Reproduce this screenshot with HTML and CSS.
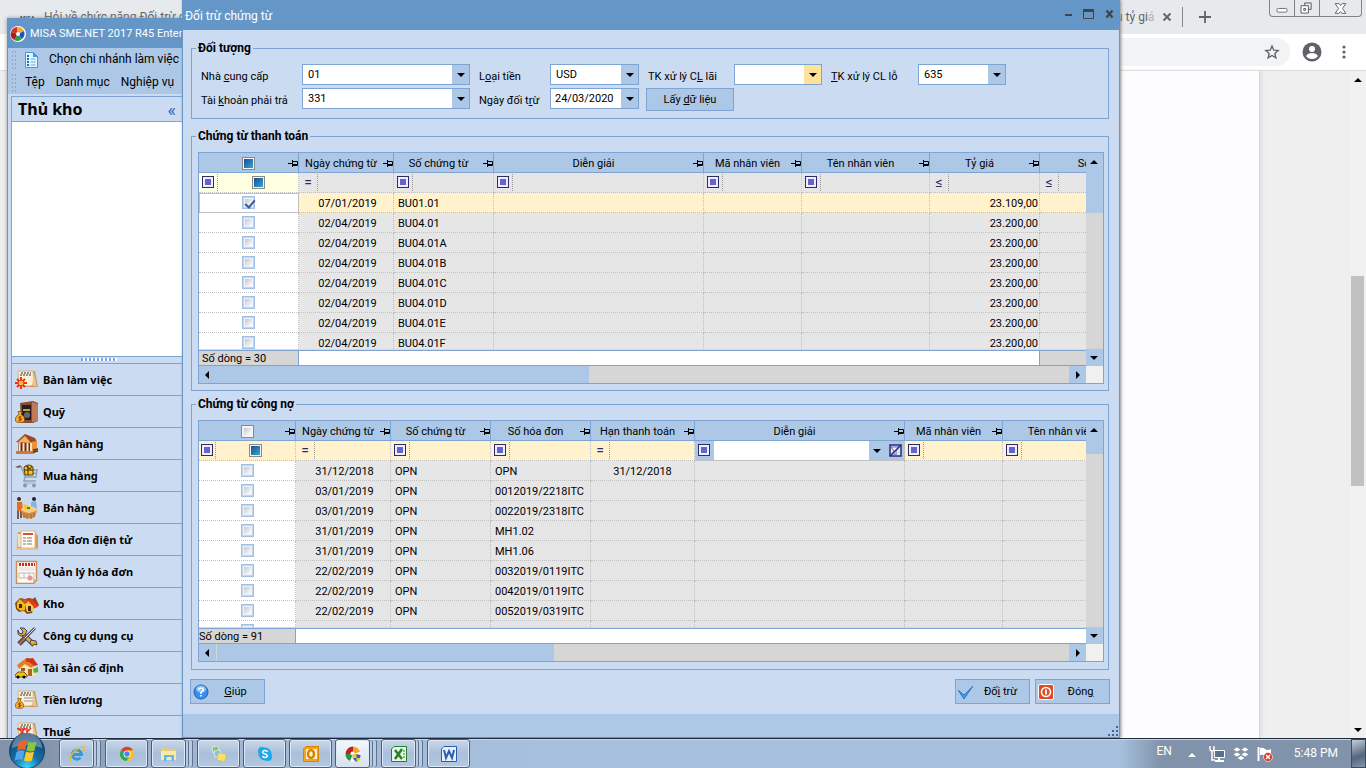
FILE: index.html
```html
<!DOCTYPE html>
<html lang="vi">
<head>
  <meta charset="UTF-8" />
  <meta name="viewport" content="width=device-width, initial-scale=1.0" />
  <title>Đối trừ chứng từ</title>
  <link rel="stylesheet" href="styles.css">
</head>
<body>

<svg class="defs" width="0" height="0" aria-hidden="true">
  <symbol id="pin" viewBox="0 0 10 8"><path d="M0 4.500h4M4.500 1v7M5 2.500h4.500v4H5M5 5.500h4" fill="none" stroke="#000"/></symbol>
  <symbol id="scroll" viewBox="0 0 24 24">
    <path d="M3 3h17l3 16H8z" fill="#c8955a"/><path d="M3 3h15l1 14-4 1H4z" fill="#fbf0d8" stroke="#d9b27c"/>
    <path d="M6 5h10M5 7h12" stroke="#333" stroke-dasharray="2 1"/><path d="M19 5l3 14-5-2" fill="#e8c48f"/>
  </symbol>
  <symbol id="bag" viewBox="0 0 10 12">
    <path d="M3 1h4L6 4c3 1 4 4 3.500 6.500Q9 12 5 12T.5 10.500C0 8 1 5 4 4z" fill="#f2b322" stroke="#8a4a10" stroke-width=".8"/>
    <path d="M6.500 6.500Q4 5.500 3.800 7T6.200 8.500 3.500 10M5 5.500v5.500" fill="none" stroke="#a32b10" stroke-width=".9"/>
  </symbol>
</svg>

<div class="desktop">

  <!-- Trình duyệt phía sau -->
  <div class="browser">
    <div class="tabs">
      <span class="favicon">MISA</span>
      <span class="tab-title">Hỏi về chức năng Đối trừ c</span>
      <span class="tab-end">u tỷ gi<i>á</i></span>
      <svg class="tab-x" viewBox="0 0 10 10"><path d="M1.500 1.500l7 7M8.500 1.500l-7 7" stroke="#5f6368" stroke-width="1.800"/></svg>
      <span class="tab-sep"></span>
      <svg class="tab-new" viewBox="0 0 12 12"><path d="M6 0v12M0 6h12" stroke="#5f6368" stroke-width="1.800"/></svg>
      <div class="win-buttons">
        <svg viewBox="0 0 26 16"><rect x="7.500" y="8.500" width="11" height="4" rx="1.500" fill="#fff" stroke="#666"/></svg>
        <svg viewBox="0 0 26 16"><path d="M10.500 2.500h7v7h-7z" fill="none" stroke="#555"/><path d="M6.500 5.500h8v8h-8z" fill="#fff" stroke="#555"/><path d="M9.500 8.500h2v2h-2z" fill="none" stroke="#555"/></svg>
        <svg viewBox="0 0 42 16"><path d="M15.500 3.500h4l1.500 2 1.500-2h4l-3.500 5 3.500 5h-4l-1.500-2-1.500 2h-4l3.500-5z" fill="#fff" stroke="#666"/></svg>
      </div>
    </div>
    <div class="address">
      <div class="omnibox">
        <svg width="16" height="16" viewBox="0 0 24 24"><path d="M12 3l2.600 6.200 6.700.6-5 4.400 1.500 6.600L12 17.300l-5.800 3.500 1.500-6.600-5-4.400 6.700-.6z" fill="none" stroke="#5f6368" stroke-width="2"/></svg>
      </div>
      <svg class="avatar" viewBox="0 0 20 20"><circle cx="10" cy="10" r="9.500" fill="#5f6368"/><circle cx="10" cy="7" r="3" fill="#fff"/><path d="M4 14q2-3 6-3t6 3q-2 3-6 3t-6-3" fill="#fff"/></svg>
      <svg class="dots" viewBox="0 0 4 14"><circle cx="2" cy="2" r="1.600"/><circle cx="2" cy="7" r="1.600"/><circle cx="2" cy="12" r="1.600"/></svg>
    </div>
    <div class="web">
      <div class="paper"></div>
      <div class="web-scroll"><span class="tri up"></span><div class="web-thumb"></div><span class="tri down"></span></div>
    </div>
  </div>

  <!-- Cửa sổ chính MISA -->
  <div class="main-window">
    <div class="main-title">
      <svg width="16" height="16" viewBox="0 0 16 16"><circle cx="8" cy="8" r="8" fill="#fff"/><path d="M8 8L1 6a7 7 0 0 1 6-5z" fill="#d32f2f"/><path d="M8 8L7 1a7 7 0 0 1 7 4z" fill="#f9a825"/><path d="M8 8l6-3a7 7 0 0 1-2 8z" fill="#1e50c8"/><path d="M8 8l4 5a7 7 0 0 1-8 1z" fill="#2e9e3c"/><path d="M8 8l-4 6a7 7 0 0 1-3-8z" fill="#a32020"/><circle cx="8" cy="8" r="2" fill="#fff"/></svg>
      MISA SME.NET 2017 R45 Enterprise
    </div>
    <div class="toolbar">
      <div class="tool-row">
        <span class="grip"></span>
        <svg class="doc" width="13" height="16" viewBox="0 0 13 16"><path d="M.5 .5h8l4 4v11H.5z" fill="#e5f5ff" stroke="#3a9be0"/><path d="M8 0l5 5H8z" fill="#3a9be0"/><path d="M2 4h2M2 7h2M2 10h2M2 13h2" stroke="#176fbf" stroke-width="2"/><path d="M5.500 7h5M5.500 10h5M5.500 13h5" stroke="#5cb3ee"/></svg>
        Chọn chi nhánh làm việc
      </div>
      <div class="tool-row menu"><span class="grip"></span><a href="#">Tệp</a><a href="#">Danh mục</a><a href="#">Nghiệp vụ</a></div>
    </div>
    <div class="nav">
      <div class="nav-head"><h1>Thủ kho</h1><span>«</span></div>
      <div class="nav-blank"></div>
      <div class="splitter"><span></span></div>
      <ul>
        <li><a href="#"><svg viewBox="0 0 24 24"><use href="#scroll"/><g stroke="#e8301c" stroke-width="2"><path d="M6 9v12M0 15h12M2 11l8 8M10 11l-8 8"/></g><circle cx="6" cy="15" r="3" fill="#ffb62e" stroke="#e8301c"/></svg>Bàn làm việc</a></li>
        <li><a href="#"><svg viewBox="0 0 24 24"><path d="M5 3l13-2 5 2v18l-5 2H6z" fill="#8c4a35"/><path d="M17 2l6 2v17l-6 1z" fill="#c07a5c"/><path d="M7 5h9v15H7z" fill="#2c1a16"/><path d="M8 9h7v2H8z" fill="#a8b030"/><circle cx="12" cy="15" r="3" fill="#667"/><use href="#bag" x="0" y="10" width="10" height="13"/></svg>Quỹ</a></li>
        <li><a href="#"><svg viewBox="0 0 24 24"><path d="M1 10L10 2l10 4 2 4-8 2z" fill="#a34523"/><path d="M3 10l7-6 6 7z" fill="#f0b560"/><path d="M16 10l6-1v9l-5 2z" fill="#e7953c"/><path d="M3 11h13v8H3z" fill="#6a2c16"/><path d="M4.500 11v8M8.500 11v8M12.500 11v8M16 11v8" stroke="#fbe3bd" stroke-width="2"/><path d="M1 19h16l6-2v2l-5 3H1z" fill="#c97a45"/><path d="M18 18l5-1M18 20l5-1" stroke="#442" stroke-width="1.500"/></svg>Ngân hàng</a></li>
        <li><a href="#"><svg viewBox="0 0 24 24"><path d="M0 3l5-2 2 2-4 1z" fill="#8a5a55"/><path d="M6 2l4 11h11l1-8M9 10l12-1M10 13l-1 4h12M8 6h14" fill="none" stroke="#8fa3b3" stroke-width="1.500"/><path d="M9 3q5-4 9 0v8h-8z" fill="#f4c51d" stroke="#5a3b0c"/><path d="M13 2v9M10 6h8M11 2l4 3 2-3" stroke="#3a260b" fill="none"/><path d="M9 19h11M8 21l12-3" stroke="#b9c5cf" stroke-width="1.500"/><circle cx="10" cy="21.500" r="2" fill="#8a98a5"/><circle cx="19" cy="21.500" r="2" fill="#8a98a5"/></svg>Mua hàng</a></li>
        <li><a href="#"><svg viewBox="0 0 24 24"><circle cx="4" cy="3" r="2" fill="#4a2a1c"/><path d="M2 6h5l1 9H2z" fill="#ec6a1c"/><path d="M3 15v8M6 15v7" stroke="#5a3520" stroke-width="1.500"/><circle cx="19" cy="3" r="2" fill="#223"/><path d="M16 6l5-1 1 8h-6z" fill="#7fb3e0"/><ellipse cx="14" cy="14" rx="8" ry="4" fill="#f6cb86"/><path d="M6 14q8 6 16 0l-2 7q-6 3-12 0z" fill="#d18d45"/><path d="M9 17v5M12 18v5M16 18v5M19 17v4" stroke="#a8672b"/><path d="M8 8l4 1 4 4-6 1z" fill="#f0cb20"/><path d="M12 12h3" stroke="#4a8d28" stroke-width="2"/></svg>Bán hàng</a></li>
        <li><a href="#"><svg viewBox="0 0 24 24"><path d="M3 4h17l3 4v13H2z" fill="#d09a62"/><path d="M3 6h4v13H3z" fill="#f6e2bd"/><path d="M6 3h14v17H6z" fill="#fffdf5" stroke="#dcb98a"/><path d="M8 6h10" stroke="#e04a2f" stroke-width="2"/><path d="M8 10h3M12 10h5M8 13h3M12 13h5M8 16h3M12 16h5" stroke="#777"/><path d="M1 20h22v2H1z" fill="#e9bf8a"/></svg>Hóa đơn điện tử</a></li>
        <li><a href="#"><svg viewBox="0 0 24 24"><path d="M1.500 1.500h20v19l-3 3h-17z" fill="#fff9f0" stroke="#c98f5c" stroke-width="1.500"/><path d="M4 4.500h16" stroke="#e21f1f" stroke-width="3" stroke-dasharray="2 1"/><path d="M4 8h16M4 10h16" stroke="#ddd"/><path d="M4 13h15v5H4zM9 13v5M14 13v5" fill="none" stroke="#b9bcc4"/><circle cx="15" cy="18" r="2.500" fill="#e59595"/><path d="M18 23v-4h4z" fill="#e0b47e"/></svg>Quản lý hóa đơn</a></li>
        <li><a href="#"><svg viewBox="0 0 24 24"><path d="M0 11l5-5 5 1 4-1 4 1 2-2 4 8-6 4-1 4-5 1-3-3-5 1-3-3z" fill="#8a4c12"/><path d="M2 11l3-4 5 5v6l-4 1-4-3z" fill="#f0b91c"/><path d="M10 12l4-3 5 4-1 6-6 1z" fill="#ffce3c"/><path d="M7 7l7 1-4 4z" fill="#e6492c"/><path d="M15 6l9 8-4 2-6-6z" fill="#e33a22"/><path d="M4 12v4h3v-4zM13 14v5h3v-5z" fill="#4b2406"/></svg>Kho</a></li>
        <li><a href="#"><svg viewBox="0 0 24 24"><path d="M7 9l12 12" stroke="#3c4a64" stroke-width="5"/><path d="M7 9l12 12" stroke="#f4aa28" stroke-width="3"/><path d="M5 4l3 3-1 3-3-1-1-3q-1 5 3 6l4-1 2-4-3-3z" fill="#f4aa28" stroke="#3c4a64"/><path d="M16 16l5 1 1 4-3-1-2 2-2-3z" fill="#f4aa28" stroke="#3c4a64"/><path d="M20 4L9 15" stroke="#556" stroke-width="3"/><path d="M20 4L9 15" stroke="#dde3ea"/><path d="M10 14l-6 6" stroke="#5a4440" stroke-width="5"/><path d="M10 14l-6 6" stroke="#a37060" stroke-width="2"/></svg>Công cụ dụng cụ</a></li>
        <li><a href="#"><svg viewBox="0 0 24 24"><path d="M4 10h14l3 2v8H4z" fill="#fbe3ab"/><path d="M2 9l8-6 9 7-3 2-6-4-6 5z" fill="#eb7a22"/><path d="M10 3l8-1 5 7-4 1z" fill="#d9301c"/><path d="M11 2h3v4h-3z" fill="#b84a22"/><path d="M13 13h4v7h-4z" fill="#b5641f"/><path d="M6 12h4v3H6z" fill="#8a6030"/><path d="M18 13l5-2v5l-4 1z" fill="#55b02c"/><path d="M0 19l3-3h6l3 3v2H0z" fill="#f3bf1a" stroke="#7a560b"/><circle cx="3" cy="21" r="1.500"/><circle cx="9" cy="21" r="1.500"/></svg>Tài sản cố định</a></li>
        <li><a href="#"><svg viewBox="0 0 24 24"><use href="#scroll"/><path d="M9 10h9M9 13h9" stroke="#999"/><use href="#bag" x="0" y="9" width="9" height="12"/></svg>Tiền lương</a></li>
        <li><a href="#"><svg viewBox="0 0 24 24"><use href="#scroll"/><path d="M3 8l8 8M10 8l-6 8M2 9h9M12 8v8M12 12l4-4" stroke="#e0302a" stroke-width="1.500"/></svg>Thuế</a></li>
      </ul>
    </div>
  </div>

  <!-- Hộp thoại đối trừ chứng từ -->
  <div class="dialog" role="dialog" aria-labelledby="dlg-title">
    <div class="dialog-title">
      <span id="dlg-title">Đối trừ chứng từ</span>
      <div class="dialog-controls">
        <svg viewBox="0 0 12 12"><path d="M2 7h7" stroke="#444" stroke-width="2"/></svg>
        <svg viewBox="0 0 12 12"><path d="M.5 1.500h10v9H.5z" fill="none" stroke="#444"/><path d="M0 2.500h11" stroke="#444" stroke-width="3"/></svg>
        <svg viewBox="0 0 12 12"><path d="M3.500 2.500l6 7M9.500 2.500l-6 7" stroke="#444" stroke-width="2.200"/></svg>
      </div>
    </div>

    <div class="dialog-body">
      <fieldset class="doi-tuong">
        <legend>Đối tượng</legend>
        <div class="form">
          <label for="ncc">Nhà <u>c</u>ung cấp</label>
          <span class="combo"><select id="ncc"><option>01</option></select></span>
          <label for="tien">L<u>o</u>ại tiền</label>
          <span class="combo"><select id="tien"><option>USD</option></select></span>
          <label for="lai">TK xử lý C<u>L</u> lãi</label>
          <span class="combo hot"><select id="lai"><option></option></select></span>
          <label for="lo"><u>T</u>K xử lý CL lỗ</label>
          <span class="combo"><select id="lo"><option>635</option></select></span>

          <label for="tk">Tài <u>k</u>hoản phải trả</label>
          <span class="combo"><select id="tk"><option>331</option></select></span>
          <label for="ngay">Ngày đối t<u>r</u>ừ</label>
          <span class="combo date"><input type="text" id="ngay" value="24/03/2020"></span>
          <button type="button" class="load">Lấy <u>d</u>ữ liệu</button>
        </div>
      </fieldset>

      <fieldset class="thanh-toan">
        <legend>Chứng từ thanh toán</legend>
        <div class="grid">
          <div class="view">
            <table>
              <colgroup><col class="w100"><col class="w95"><col class="w100"><col class="w210"><col class="w98"><col class="w128"><col class="w110"><col class="w120"></colgroup>
              <thead>
                <tr>
                  <th><div><span><input type="checkbox" class="tri-state" aria-label="Chọn tất cả"></span><svg><use href="#pin"/></svg></div></th>
                  <th><div><span>Ngày chứng từ</span><svg><use href="#pin"/></svg></div></th>
                  <th><div><span>Số chứng từ</span><svg><use href="#pin"/></svg></div></th>
                  <th><div><span>Diễn giải</span><svg><use href="#pin"/></svg></div></th>
                  <th><div><span>Mã nhân viên</span><svg><use href="#pin"/></svg></div></th>
                  <th><div><span>Tên nhân viên</span><svg><use href="#pin"/></svg></div></th>
                  <th><div><span>Tỷ giá</span><svg><use href="#pin"/></svg></div></th>
                  <th><div><span>Số tiền</span><svg><use href="#pin"/></svg></div></th>
                </tr>
                <tr class="filter">
                  <td class="pale"><div><span class="op"><b></b></span><input type="checkbox" class="tri-state" aria-label="Lọc chọn"></div></td>
                  <td><div><span class="op">=</span><input type="text" aria-label="Lọc ngày"></div></td>
                  <td><div><span class="op"><b></b></span><input type="text" aria-label="Lọc số chứng từ"></div></td>
                  <td><div><span class="op"><b></b></span><input type="text" aria-label="Lọc diễn giải"></div></td>
                  <td><div><span class="op"><b></b></span><input type="text" aria-label="Lọc mã nhân viên"></div></td>
                  <td><div><span class="op"><b></b></span><input type="text" aria-label="Lọc tên nhân viên"></div></td>
                  <td><div><span class="op">≤</span><input type="text" aria-label="Lọc tỷ giá"></div></td>
                  <td><div><span class="op">≤</span><input type="text" aria-label="Lọc số tiền"></div></td>
                </tr>
              </thead>
              <tbody>
                <tr class="selected"><td><input type="checkbox" aria-label="BU01.01" checked></td><td>07/01/2019</td><td>BU01.01</td><td></td><td></td><td></td><td class="num">23.109,00</td><td></td></tr>
                <tr><td><input type="checkbox" aria-label="BU04.01"></td><td>02/04/2019</td><td>BU04.01</td><td></td><td></td><td></td><td class="num">23.200,00</td><td></td></tr>
                <tr><td><input type="checkbox" aria-label="BU04.01A"></td><td>02/04/2019</td><td>BU04.01A</td><td></td><td></td><td></td><td class="num">23.200,00</td><td></td></tr>
                <tr><td><input type="checkbox" aria-label="BU04.01B"></td><td>02/04/2019</td><td>BU04.01B</td><td></td><td></td><td></td><td class="num">23.200,00</td><td></td></tr>
                <tr><td><input type="checkbox" aria-label="BU04.01C"></td><td>02/04/2019</td><td>BU04.01C</td><td></td><td></td><td></td><td class="num">23.200,00</td><td></td></tr>
                <tr><td><input type="checkbox" aria-label="BU04.01D"></td><td>02/04/2019</td><td>BU04.01D</td><td></td><td></td><td></td><td class="num">23.200,00</td><td></td></tr>
                <tr><td><input type="checkbox" aria-label="BU04.01E"></td><td>02/04/2019</td><td>BU04.01E</td><td></td><td></td><td></td><td class="num">23.200,00</td><td></td></tr>
                <tr><td><input type="checkbox" aria-label="BU04.01F"></td><td>02/04/2019</td><td>BU04.01F</td><td></td><td></td><td></td><td class="num">23.200,00</td><td></td></tr>
              </tbody>
            </table>
          </div>
          <div class="summary"><span class="w100">Số dòng = 30</span><span class="blank w741"></span></div>
          <div class="vscroll"><div class="thumb"><span class="tri up"></span></div><div class="btn"><span class="tri down"></span></div></div>
          <div class="hscroll"><div class="thumb"><span class="tri left"></span></div><div class="btn"><span class="tri right"></span></div></div>
        </div>
      </fieldset>

      <fieldset class="cong-no">
        <legend>Chứng từ công nợ</legend>
        <div class="grid">
          <div class="view">
            <table>
              <colgroup><col class="w97"><col class="w95"><col class="w100"><col class="w100"><col class="w104"><col class="w210"><col class="w98"><col class="w128"></colgroup>
              <thead>
                <tr>
                  <th><div><span><input type="checkbox" class="head-box" aria-label="Chọn tất cả"></span><svg><use href="#pin"/></svg></div></th>
                  <th><div><span>Ngày chứng từ</span><svg><use href="#pin"/></svg></div></th>
                  <th><div><span>Số chứng từ</span><svg><use href="#pin"/></svg></div></th>
                  <th><div><span>Số hóa đơn</span><svg><use href="#pin"/></svg></div></th>
                  <th><div><span>Hạn thanh toán</span><svg><use href="#pin"/></svg></div></th>
                  <th><div><span>Diễn giải</span><svg><use href="#pin"/></svg></div></th>
                  <th><div><span>Mã nhân viên</span><svg><use href="#pin"/></svg></div></th>
                  <th><div><span>Tên nhân viên</span><svg><use href="#pin"/></svg></div></th>
                </tr>
                <tr class="filter active">
                  <td><div><span class="op"><b></b></span><input type="checkbox" class="tri-state" aria-label="Lọc chọn"></div></td>
                  <td><div><span class="op">=</span><input type="text" aria-label="Lọc ngày"></div></td>
                  <td><div><span class="op"><b></b></span><input type="text" aria-label="Lọc số chứng từ"></div></td>
                  <td><div><span class="op"><b></b></span><input type="text" aria-label="Lọc số hóa đơn"></div></td>
                  <td><div><span class="op">=</span><input type="text" aria-label="Lọc hạn thanh toán"></div></td>
                  <td class="editing"><div><span class="op"><b></b></span><input type="text" aria-label="Lọc diễn giải"><span class="tri down"></span><svg class="funnel" viewBox="0 0 13 13"><path d="M1 1h11v11H1z" fill="#dfe3fa" stroke="#2c2c6c" stroke-width="1.500"/><path d="M2 3h8L7 7v4H5V7z" fill="#fff" stroke="#6464cc"/><path d="M1 12L12 1" stroke="#2c2c6c" stroke-width="1.500"/></svg></div></td>
                  <td><div><span class="op"><b></b></span><input type="text" aria-label="Lọc mã nhân viên"></div></td>
                  <td><div><span class="op"><b></b></span><input type="text" aria-label="Lọc tên nhân viên"></div></td>
                </tr>
              </thead>
              <tbody>
                <tr><td><input type="checkbox" aria-label="OPN"></td><td>31/12/2018</td><td>OPN</td><td>OPN</td><td class="mid">31/12/2018</td><td></td><td></td><td></td></tr>
                <tr><td><input type="checkbox" aria-label="0012019/2218ITC"></td><td>03/01/2019</td><td>OPN</td><td>0012019/2218ITC</td><td></td><td></td><td></td><td></td></tr>
                <tr><td><input type="checkbox" aria-label="0022019/2318ITC"></td><td>03/01/2019</td><td>OPN</td><td>0022019/2318ITC</td><td></td><td></td><td></td><td></td></tr>
                <tr><td><input type="checkbox" aria-label="MH1.02"></td><td>31/01/2019</td><td>OPN</td><td>MH1.02</td><td></td><td></td><td></td><td></td></tr>
                <tr><td><input type="checkbox" aria-label="MH1.06"></td><td>31/01/2019</td><td>OPN</td><td>MH1.06</td><td></td><td></td><td></td><td></td></tr>
                <tr><td><input type="checkbox" aria-label="0032019/0119ITC"></td><td>22/02/2019</td><td>OPN</td><td>0032019/0119ITC</td><td></td><td></td><td></td><td></td></tr>
                <tr><td><input type="checkbox" aria-label="0042019/0119ITC"></td><td>22/02/2019</td><td>OPN</td><td>0042019/0119ITC</td><td></td><td></td><td></td><td></td></tr>
                <tr><td><input type="checkbox" aria-label="0052019/0319ITC"></td><td>22/02/2019</td><td>OPN</td><td>0052019/0319ITC</td><td></td><td></td><td></td><td></td></tr>
                <tr><td><input type="checkbox" aria-label="0062019/0319ITC"></td><td>22/02/2019</td><td>OPN</td><td>0062019/0319ITC</td><td></td><td></td><td></td><td></td></tr>
              </tbody>
            </table>
          </div>
          <div class="summary"><span class="w97">Số dòng = 91</span><span class="blank"></span></div>
          <div class="vscroll"><div class="thumb"><span class="tri up"></span></div><div class="btn"><span class="tri down"></span></div></div>
          <div class="hscroll"><div class="thumb"><span class="tri left"></span></div><div class="btn"><span class="tri right"></span></div></div>
        </div>
      </fieldset>

      <div class="actions">
        <button type="button"><svg viewBox="0 0 16 16"><circle cx="8" cy="8" r="7" fill="#3c8df0" stroke="#1560b8"/><ellipse cx="8" cy="5" rx="5" ry="3.500" fill="#8cc3fb"/><path d="M5.500 6Q6 4 8 4t2.400 2Q10.300 7.200 8 8.500V10M8 11v1.500" fill="none" stroke="#fff" stroke-width="1.600"/></svg><span><u>G</u>iúp</span></button>
        <button type="button" class="push"><svg viewBox="0 0 16 16"><path d="M0 6l6 9 9-13-9 9z" fill="#3c9cf5" stroke="#1b62b4" stroke-width=".7"/></svg><span>Đố<u>i</u> trừ</span></button>
        <button type="button"><svg viewBox="0 0 16 16"><rect x=".5" y=".5" width="15" height="15" rx="1.500" fill="#e04a26" stroke="#fff"/><circle cx="8" cy="8" r="4.500" fill="none" stroke="#fff" stroke-width="1.600"/><path d="M8 5.500v5" stroke="#fff" stroke-width="1.800"/></svg><span>Đón<u>g</u></span></button>
      </div>
    </div>
    <div class="status">
      <svg width="11" height="11" viewBox="0 0 11 11"><path d="M8 0h2v2H8zM4 4h2v2H4zM8 4h2v2H8zM0 8h2v2H0zM4 8h2v2H4zM8 8h2v2H8z" fill="#42659c"/></svg>
    </div>
  </div>
</div>

<div class="taskbar">
  <button type="button" class="start" aria-label="Start">
    <svg viewBox="0 0 36 36">
      <defs><radialGradient id="orb" cx=".5" cy=".95" r=".9"><stop offset="0" stop-color="#3fd8ff"/><stop offset=".4" stop-color="#1673ab"/><stop offset="1" stop-color="#14406e"/></radialGradient></defs>
      <circle cx="18" cy="18" r="17.500" fill="url(#orb)" stroke="#1b4063"/><path d="M3 15a15 15 0 0 1 30 0q-15-6-30 0" fill="#fff" opacity=".3"/>
      <path d="M10 9q4-3 8-1l-2 9q-4-2-8 1z" fill="#f0622a"/><path d="M19.500 8.500q4 2 8 0l-2 9q-4 2-8 0z" fill="#8cc63e"/><path d="M7.500 19q4-3 8-1l-2 9q-4-2-8 1z" fill="#4fa8e8"/><path d="M17 18.500q4 2 8 0l-2 9q-4 2-8 0z" fill="#fcc82e"/>
    </svg>
  </button>
  <div class="tasks">
    <button type="button" class="task stack2" aria-label="Internet Explorer"><svg viewBox="0 0 16 16"><path d="M3.500 8.500h9a4.600 4.600 0 1 0-1 3" fill="none" stroke="#2c9be0" stroke-width="2.800"/><path d="M2 15Q-1 13 4 7T14 1t0 4" fill="none" stroke="#f5b921" stroke-width="1.500"/></svg></button>
    <button type="button" class="task" aria-label="Chrome"><svg viewBox="0 0 16 16"><circle cx="8" cy="8" r="7" fill="#fbc116"/><path d="M8 8L2 4.200A7 7 0 0 1 14 4.200H8z" fill="#e33b2e"/><path d="M8 8L2 4.200A7 7 0 0 0 7.500 15L11 9.500z" fill="#2da94f"/><circle cx="8" cy="8" r="3.500" fill="#fff"/><circle cx="8" cy="8" r="2.700" fill="#4285f4"/></svg></button>
    <button type="button" class="task stack2" aria-label="Explorer"><svg viewBox="0 0 16 16"><path d="M0 2h6l1 1h8v11H0z" fill="#e9cd72"/><path d="M0 5h15v9H0z" fill="#fbeaa5"/><path d="M3 15V9h10v6h-2.500v-4h-5v4z" fill="#62b8ea"/></svg></button>
    <button type="button" class="task" aria-label="Ghi chú"><svg viewBox="0 0 16 16"><path d="M1 1l6-1 1 6-6 1z" fill="#7fc965" stroke="#fff" stroke-width=".6"/><path d="M3 5l6-1 1 6-6 1z" fill="#7fc0ea" stroke="#fff" stroke-width=".6"/><path d="M7 7l8 1-1 8-8-2z" fill="#f8e26b" stroke="#d8b832" stroke-width=".6"/></svg></button>
    <button type="button" class="task" aria-label="Skype"><svg viewBox="0 0 16 16"><circle cx="8" cy="8" r="6.500" fill="#1ba9ec"/><circle cx="5" cy="5" r="4" fill="#1ba9ec"/><circle cx="11" cy="11" r="4" fill="#1ba9ec"/><path d="M10.500 6Q10 4.500 8 4.500T5.700 6.200Q5.800 7.500 8 8t2.400 2Q10 11.500 8 11.500T5.500 10" fill="none" stroke="#fff" stroke-width="1.500"/></svg></button>
    <button type="button" class="task" aria-label="Outlook"><svg viewBox="0 0 16 16"><path d="M3 .5h12.500v15H.5V3z" fill="#f2a51a" stroke="#d98300"/><path d="M3 3h11v10H3z" fill="#fff3cf"/><ellipse cx="8" cy="8" rx="3" ry="4" fill="none" stroke="#d98300" stroke-width="2.500"/></svg></button>
    <button type="button" class="task stack2 on" aria-label="MISA"><svg viewBox="0 0 16 16"><circle cx="8" cy="8" r="7.500" fill="#fff"/><path d="M8 8H.5A7.500 7.500 0 0 1 8 .5z" fill="#c41e2a"/><path d="M8 8V.5A7.500 7.500 0 0 1 15 6z" fill="#f3a61c"/><path d="M8 8l-3 7A7.500 7.500 0 0 1 .5 8z" fill="#2c9440"/><circle cx="7.500" cy="7.500" r="2" fill="#fff"/><path d="M11.500 8l4 1q0 5-4 7-4-2-4-7z" fill="#2a63c4"/><path d="M11.500 12h4q-1 3-4 4zM11.500 8v4h-4V9z" fill="#f6c92f"/></svg></button>
    <button type="button" class="task stack2" aria-label="Excel"><svg viewBox="0 0 16 16"><path d="M3 .5h12.500v15H.5V3z" fill="#e9f5e6" stroke="#26802c"/><path d="M4 4l7 9M11 3L4 13" stroke="#26802c" stroke-width="2.500"/><path d="M12 5h2M12 8h2M12 11h2" stroke="#26802c"/></svg></button>
    <button type="button" class="task" aria-label="Word"><svg viewBox="0 0 16 16"><path d="M3 .5h12.500v15H.5V3z" fill="#e8f0fb" stroke="#2a5db0"/><path d="M3 4l2 8 3-7 3 7 2-8" fill="none" stroke="#2a5db0" stroke-width="2"/></svg></button>
  </div>
  <div class="tray">
    <span class="lang">EN</span>
    <span class="tri up"></span>
    <svg viewBox="0 0 16 16"><path d="M5.500 4.500h10v7h-10z" fill="#5c7088" stroke="#fff"/><path d="M10 12v2M6 15h9" stroke="#fff" stroke-width="2"/><path d="M1 0v3q0 2 2 2t2-2V0M3 5v9h3" fill="none" stroke="#fff" stroke-width="1.500"/></svg>
    <svg viewBox="0 0 16 16"><path d="M4 1l4 2.500L4 6 0 3.500zM12 1l4 2.500L12 6 8 3.500zM4 6l4 2.500L4 11 0 8.500zM12 6l4 2.500-4 2.500-4-2.500zM8 9.500l4 2.500-4 2.500L4 12z" fill="#fff" stroke="#66788e" stroke-width=".5"/></svg>
    <svg viewBox="0 0 16 16"><path d="M1.500 1v14" stroke="#fff" stroke-width="2"/><path d="M3 2q3-1 5 1t6 0v7q-4 2-6 0T3 9z" fill="#fff"/><circle cx="11" cy="11" r="4.500" fill="#d8382c" stroke="#fff" stroke-width=".6"/><path d="M9 9l4 4M13 9l-4 4" stroke="#fff" stroke-width="1.500"/></svg>
    <span class="clock">5:48 PM</span>
  </div>
  <button type="button" class="peek" aria-label="Show desktop"></button>
</div>

</body>
</html>
```
FILE: styles.css
```css
:root {
  --title: #6496c8;
  --panel: #cbdbf1;
  --bar: #adc8e6;
  --line: #7ea4d4;
  --cell: #e6e6e6;
  --row: #fff2cc;
  --dot: #c0c0c0;
}

* {
  box-sizing: border-box;
}

body {
  margin: 0;
  height: 100vh;
  display: flex;
  flex-direction: column;
  overflow: hidden;
  font-family: Roboto, "Liberation Sans", sans-serif;
  font-size: 11px;
  line-height: 15px;
  color: #000;
}

button, input, select {
  font: inherit;
  color: inherit;
  margin: 0;
}

svg {
  display: block;
  flex: none;
}

a {
  color: inherit;
  text-decoration: none;
}

.defs {
  position: absolute;
}

.desktop {
  position: relative;
  flex: 1;
  overflow: hidden;
}

.tri {
  flex: none;
  border: 4px solid transparent;
}

.tri.up {
  border-top: 0;
  border-bottom-color: #000;
}

.tri.down {
  border-bottom: 0;
  border-top-color: #000;
}

.tri.left {
  border-left: 0;
  border-right-color: #000;
}

.tri.right {
  border-right: 0;
  border-left-color: #000;
}

/* browser */
.browser {
  height: 100%;
  display: flex;
  flex-direction: column;
  background: #fff;
}

.tabs {
  height: 34px;
  background: #e6eaed;
  display: flex;
  align-items: center;
  padding-left: 20px;
  font-size: 12px;
  color: #5f6368;
}

.favicon {
  width: 24px;
  font-size: 6px;
  font-weight: bold;
  color: #333;
}

.tab-title {
  width: 138px;
  overflow: hidden;
  white-space: nowrap;
}

.tab-end {
  margin-left: auto;
  width: 38px;
  text-align: right;
  white-space: nowrap;
}

.tab-end i {
  font-style: normal;
  opacity: 0.4;
}

.tab-x {
  width: 10px;
  height: 10px;
  margin-left: 8px;
}

.tab-sep {
  width: 1px;
  height: 20px;
  margin-left: 10px;
  background: #85898e;
}

.tab-new {
  width: 12px;
  height: 12px;
  margin: 0 58px 0 16px;
}

.win-buttons {
  display: flex;
  align-self: flex-start;
  margin-right: 4px;
  border: 1px solid #808487;
  border-top: 0;
  border-radius: 0 0 4px 4px;
}

.win-buttons svg {
  width: 25px;
  height: 16px;
  border-right: 1px solid #808487;
}

.win-buttons svg:last-child {
  width: 41px;
  border: 0;
}

.address {
  height: 37px;
  display: flex;
  align-items: center;
  border-bottom: 1px solid #d8dadc;
}

.omnibox {
  flex: 1;
  height: 28px;
  margin-left: 100px;
  padding-right: 10px;
  border-radius: 14px;
  background: #f1f3f4;
  display: flex;
  align-items: center;
  justify-content: flex-end;
}

.avatar {
  width: 20px;
  height: 20px;
  margin: 0 20px 0 12px;
}

.dots {
  width: 4px;
  height: 14px;
  margin-right: 20px;
  fill: #5f6368;
}

.web {
  flex: 1;
  display: flex;
  background: #efefef;
}

.paper {
  flex: 1;
  margin: 0 90px 0 100px;
  background: #fdfdff;
  border-right: 1px solid #d8d8d8;
  box-shadow: 2px 0 4px #e0e0e0;
}

.web-scroll {
  width: 16px;
  padding: 7px 2px 6px 1px;
  background: #f1f1f1;
  display: flex;
  flex-direction: column;
  align-items: center;
}

.web-scroll .tri {
  margin: 0 0 auto;
}

.web-scroll .tri.down {
  margin: auto 0 0;
}

.web-thumb {
  width: 13px;
  height: 32%;
  margin-bottom: 48px;
  background: #c1c1c1;
}

/* main window */
.main-window {
  position: absolute;
  left: 7px;
  top: 18px;
  width: 80%;
  min-height: 100%;
  background: var(--panel);
  border: 1px solid var(--title);
  box-shadow: 0 0 4px #999;
}

.main-title {
  height: 29px;
  padding-left: 2px;
  display: flex;
  align-items: center;
  gap: 4px;
  background: var(--title);
  color: #fff;
}

.toolbar {
  background: var(--bar);
  font-size: 12px;
}

.tool-row {
  height: 23px;
  display: flex;
  align-items: center;
  padding-left: 3px;
}

.grip {
  width: 5px;
  height: 20px;
  margin-right: 9px;
  background: radial-gradient(circle, #90a5c4 1px, transparent 1px) 0 0 / 3px 4px;
}

.doc {
  margin-right: 11px;
}

.menu a {
  margin-right: 11px;
}

.nav {
  margin: 2px 0 0 3px;
  width: 176px;
  border: 1px solid var(--line);
}

.nav-head {
  height: 25px;
  padding: 0 10px 0 6px;
  display: flex;
  align-items: center;
  justify-content: space-between;
  border-bottom: 1px solid var(--line);
}

.nav-head h1 {
  margin: 0;
  font: bold 16px/24px "Noto Sans", sans-serif;
}

.nav-head span {
  font-size: 18px;
  color: #3a6cc0;
}

.nav-blank {
  height: 235px;
  background: #fff;
  border-bottom: 1px solid var(--line);
}

.splitter {
  height: 6px;
  border-bottom: 1px solid var(--line);
}

.splitter span {
  display: block;
  width: 36px;
  height: 3px;
  margin: 1px auto;
  background: repeating-linear-gradient(90deg, #7fa4e0 0 2px, #fff 2px 4px);
}

.nav ul {
  margin: 0;
  padding: 0;
  list-style: none;
}

.nav li a {
  height: 32px;
  display: flex;
  align-items: center;
  gap: 4px;
  padding-left: 3px;
  border-bottom: 1px solid var(--line);
  font: bold 11px/15px "Noto Sans", sans-serif;
}

.nav li svg {
  width: 24px;
  height: 24px;
}

/* dialog */
.dialog {
  position: absolute;
  left: 182px;
  right: 246px;
  top: 0;
  bottom: 0;
  display: flex;
  flex-direction: column;
  background: var(--panel);
  border: 1px solid var(--title);
  border-top: 0;
  box-shadow: 1px 0 3px #888;
}

.dialog-title {
  height: 30px;
  padding: 2px 4px 0 2px;
  display: flex;
  align-items: center;
  justify-content: space-between;
  background: var(--title);
  color: #fff;
  font-size: 12px;
}

.dialog-controls {
  display: flex;
  gap: 8px;
  padding-bottom: 4px;
}

.dialog-controls svg {
  width: 12px;
  height: 12px;
}

.dialog-body {
  flex: 1;
  padding: 11px 10px 0 8px;
}

fieldset {
  min-width: 0;
  margin: 0;
  border: 1px solid var(--line);
  padding: 8px 4px 6px 6px;
}

fieldset.doi-tuong {
  padding: 8px 0 7px;
  margin-bottom: 10px;
}

fieldset.thanh-toan {
  margin-bottom: 6px;
}

fieldset.cong-no {
  padding-bottom: 7px;
}

legend {
  padding: 0 2px;
  font-size: 12px;
  font-weight: bold;
  line-height: 15px;
}

.doi-tuong legend {
  margin-left: 4px;
}

.thanh-toan legend, .cong-no legend {
  margin-left: -2px;
}

.form {
  display: grid;
  grid-template-columns: 110px 168px 80px 89px 95px 88px 96px 88px;
  grid-template-rows: 21px 23px;
  row-gap: 3px;
  align-items: start;
}

.form label {
  padding: 5px 0 0 9px;
}

.combo {
  position: relative;
  display: block;
  height: 21px;
  border: 1px solid var(--line);
  background: linear-gradient(90deg, #fff calc(100% - 17px), var(--bar) 0);
}

.combo.hot {
  background: linear-gradient(90deg, #fff calc(100% - 17px), #ffe299 0);
}

.combo::after {
  content: "";
  position: absolute;
  right: 4px;
  top: 8px;
  border: 4px solid transparent;
  border-top-color: #000;
  border-bottom: 0;
  pointer-events: none;
}

.combo select, .combo input {
  appearance: none;
  display: block;
  width: 100%;
  height: 19px;
  padding: 0 17px 0 5px;
  border: 0;
  outline: 0;
  background: transparent;
}

.combo.date input {
  padding-left: 4px;
}

.load, .actions button {
  border: 1px solid var(--line);
  background: var(--bar);
  padding: 0;
}

.load {
  width: 88px;
  height: 23px;
  margin-left: 7px;
}

/* data grid */
.grid {
  display: grid;
  grid-template-columns: 1fr 17px;
  border: 1px solid var(--line);
}

.view {
  min-width: 0;
  height: 196px;
  margin-bottom: 1px;
  overflow: hidden;
  background: #fff;
}

.cong-no .view {
  height: 206px;
}

.w95 { width: 95px; }
.w97 { width: 97px; }
.w98 { width: 98px; }
.w100 { width: 100px; }
.w104 { width: 104px; }
.w110 { width: 110px; }
.w120 { width: 120px; }
.w128 { width: 128px; }
.w210 { width: 210px; }

.grid table {
  width: 100px;
  table-layout: fixed;
  border-collapse: separate;
  border-spacing: 0;
}

th, td {
  height: 20px;
  padding: 1px 4px 0;
  border-right: 1px dotted var(--dot);
  border-bottom: 1px dotted var(--dot);
  background: var(--cell);
  line-height: 15px;
  white-space: nowrap;
  text-align: left;
}

th {
  padding: 1px 0 0;
  font-weight: normal;
  background: var(--bar);
  border-right: 1px solid var(--line);
  border-bottom: 1px solid var(--line);
}

th div {
  display: flex;
  align-items: center;
}

th span {
  flex: 1;
  min-width: 0;
  text-align: center;
}

th svg {
  width: 10px;
  height: 8px;
}

th:first-child span {
  padding-left: 10px;
}

tbody td:first-child {
  padding: 0;
  background: #fff;
  text-align: center;
}

tbody td:nth-child(2), td.mid {
  text-align: center;
}

tbody td:nth-child(2) {
  padding-left: 7px;
}

td.num {
  padding-right: 1px;
  text-align: right;
}

.selected td {
  background: var(--row);
}

.selected td:first-child {
  outline: 1px solid var(--dot);
  outline-offset: -1px;
}

.filter td {
  padding: 0;
}

.filter td.pale {
  background: #ffffe1;
}

.filter.active td {
  background: var(--row);
}

.filter td div {
  display: flex;
  align-items: center;
  height: 19px;
}

.filter input[type="text"] {
  flex: 1;
  min-width: 0;
  height: 19px;
  padding: 0 2px;
  border: 0;
  outline: 0;
  background: transparent;
}

.op {
  flex: none;
  width: 19px;
  height: 17px;
  border-right: 1px dotted #999;
  color: #2c2c6c;
  font-size: 14px;
  line-height: 17px;
  text-align: center;
}

.op b {
  display: block;
  width: 12px;
  height: 12px;
  margin: 2px 0 0 3px;
  border: 1px solid #2c2c6c;
  padding: 2px;
  background: #6464cc content-box;
  box-shadow: inset 0 0 0 2px #eef;
}

.cong-no .filter td:first-child .op {
  width: 17px;
}

.cong-no .filter td:first-child b {
  margin-left: 2px;
}

.filter.active td.editing {
  background: var(--bar);
}

.editing .op {
  border: 0;
}

.filter .editing input[type="text"] {
  background: #fff;
}

.editing .tri {
  margin: 0 8px 0 4px;
}

.funnel {
  width: 13px;
  height: 13px;
  margin-right: 2px;
}

input[type="checkbox"] {
  appearance: none;
  position: relative;
  display: block;
  width: 13px;
  height: 13px;
  margin: 0 auto;
  border: 1px solid #a3bfe6;
  padding: 2px;
  background: linear-gradient(135deg, #c3c8ce, #fff) content-box, #f0f4fa;
  box-shadow: inset 0 0 0 1px #c3d5ee;
}

/* dấu tick */
input[type="checkbox"]:checked::before {
  content: "";
  position: absolute;
  left: 4px;
  top: 1px;
  width: 4px;
  height: 8px;
  border: solid #3c5a94;
  border-width: 0 2px 2px 0;
  transform: rotate(40deg);
}

input.head-box, input.tri-state {
  border-color: #8a8a8a;
  box-shadow: inset 0 0 0 1px #f4f4f4;
}

input.tri-state {
  padding: 1px;
  background: linear-gradient(135deg, #1d4f8c, #2fa5d8) content-box, #f4f4f4;
}

.summary {
  grid-column: 1;
  height: 16px;
  display: flex;
  border-top: 1px solid var(--line);
  border-bottom: 1px solid var(--line);
  background: #d6d6d6;
}

.summary span {
  padding-left: 3px;
  border-right: 1px solid var(--line);
}

.cong-no .summary span {
  padding-left: 0;
}

.summary .blank {
  flex: 1;
  background: #fff;
}

.summary .w741 {
  flex: none;
  width: 741px;
}

.cong-no .summary .blank {
  border: 0;
}

.vscroll {
  grid-column: 2;
  grid-row: 1 / 3;
  display: flex;
  flex-direction: column;
  justify-content: space-between;
  background: #d6d6d6;
}

.vscroll .thumb {
  height: 28%;
  padding-top: 7px;
  background: var(--bar);
}

.cong-no .vscroll .thumb {
  height: 15%;
}

.vscroll .tri {
  display: block;
  width: 8px;
  margin: 0 4px;
}

.vscroll .btn {
  height: 17px;
  padding-top: 7px;
  background: var(--bar);
}

.hscroll {
  height: 17px;
  display: flex;
  justify-content: space-between;
  background: #d6d6d6;
  box-shadow: 17px 0 #f0f0f0;
}

.hscroll .thumb, .hscroll .btn {
  display: flex;
  align-items: center;
  background: var(--bar);
}

.hscroll .thumb {
  width: 44%;
  padding-left: 6px;
}

.cong-no .hscroll .thumb {
  width: 40%;
  background: linear-gradient(90deg, var(--bar) 17px, #d6d6d6 17px 18px, var(--bar) 18px);
}

.hscroll .btn {
  width: 17px;
  justify-content: center;
}

.actions {
  display: flex;
  gap: 5px;
  margin: 9px -1px 0;
}

.actions button {
  width: 75px;
  height: 25px;
  display: flex;
  align-items: center;
  padding: 0 2px;
}

.actions svg {
  width: 16px;
  height: 16px;
}

.actions span {
  flex: 1;
  text-align: center;
}

.actions .push {
  margin-left: auto;
}

.status {
  height: 23px;
  display: flex;
  align-items: flex-end;
  justify-content: flex-end;
  background: var(--bar);
}

/* taskbar */
.taskbar {
  position: relative;
  height: 30px;
  display: flex;
  border-top: 1px solid #1e2a3a;
  box-shadow: inset 0 1px #c8d8ea;
  background: linear-gradient(90deg, #8393a9 0 3%, #9fb4d0 12%, #a6c0de 40%, #a6c0de 82%, #8093ab 85%);
}

.start {
  width: 36px;
  height: 36px;
  margin: -6px 14px 0 9px;
  padding: 0;
  border: 0;
  background: none;
}

.tasks {
  flex: 1;
  display: flex;
  gap: 3px;
}

.task {
  width: 43px;
  height: 29px;
  padding: 0;
  display: flex;
  align-items: center;
  justify-content: center;
  border: 1px solid #4c5f78;
  border-radius: 3px;
  box-shadow: inset 0 0 0 1px #dce8f5;
  background: linear-gradient(#c9d8ea, #a9bfda 50%, #b3c8e2);
}

.task svg {
  width: 16px;
  height: 16px;
}

.task.stack2 {
  width: 35px;
  margin-right: 8px;
  box-shadow: inset 0 0 0 1px #dce8f5, 3px 0 0 -1px #b8cbe2, 4px 0 0 -1px #5f738e, 7px 0 0 -1px #b8cbe2, 8px 0 0 -1px #5f738e;
}

.task.on {
  background: linear-gradient(#f3f7fb, #d6e2ef);
}

.tray {
  display: flex;
  align-items: center;
  color: #fff;
  font-size: 12px;
}

.tray svg {
  width: 16px;
  height: 16px;
  margin-right: 8px;
}

.tray .tri {
  margin: 2px 13px 0 16px;
  border-bottom-color: #fff;
}

.lang {
  padding-bottom: 4px;
}

.clock {
  margin: 0 13px;
}

.peek {
  width: 15px;
  padding: 0;
  border: 1px solid #3c4a5c;
  background: linear-gradient(160deg, #c0ccda, #55677e 60%, #8496ac);
}
```
